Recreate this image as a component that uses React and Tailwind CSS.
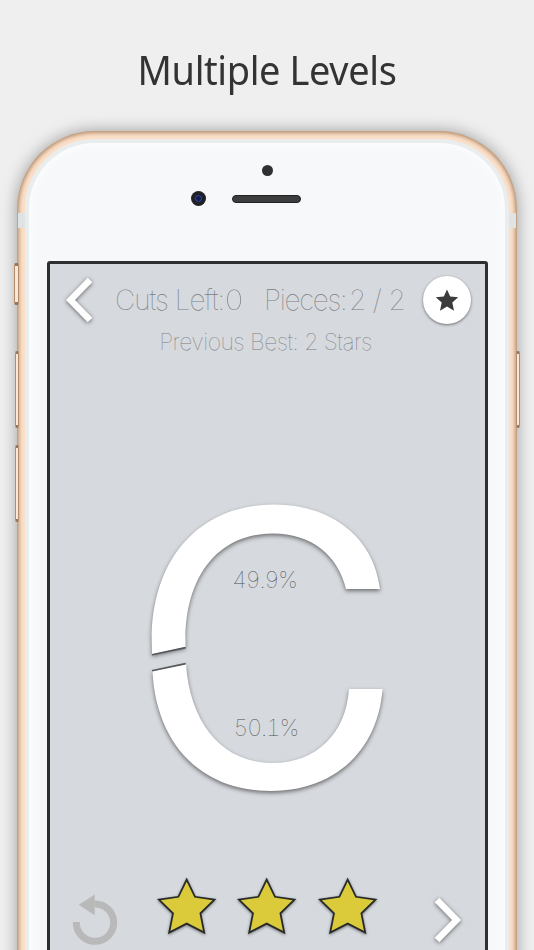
import React from "react";

const pieces = [
  {
    percent: "49.9%",
    path: "M152 654.5L151.7 640C151.5 560 198 504.5 274 504.5C332 504.5 374 538 380 589L346 589C338 555 311 533.5 273 533.5C219 533.5 185.5 575 185.5 640L185.5 647Z",
    cut: "M152 654.7L185.7 647.6",
  },
  {
    percent: "50.1%",
    path: "M152.5 671L186 664C190 724 223 763 272 763C317 763 346 733 349 689L382.5 689C378 751 334 791 271 791C200 791 156 743 152.5 671Z",
    cut: "M152 670.7L185.7 663.6",
  },
];

const Chevron = ({ points }) => (
  <svg className="w-10 h-14 overflow-visible drop-shadow-[0_1px_2px_rgba(0,0,0,0.55)]" viewBox="0 0 40 56">
    <polyline points={points} fill="none" stroke="#fff" strokeWidth="6.5" />
  </svg>
);

const Star = () => (
  <svg className="w-[60px] h-[60px] overflow-visible drop-shadow-[0_1px_1.5px_rgba(0,0,0,0.45)]" viewBox="0 0 60 60">
    <path
      d="M29.7 5.6L38 22.8L57.5 25.6L43.4 39.4L47.2 58.6L29.7 49.6L12.2 58.6L16 39.4L1.9 25.6L21.4 22.8Z"
      fill="#dbcb3b"
      stroke="#272a29"
      strokeWidth="1.8"
    />
  </svg>
);

const Header = () => (
  <div className="h-[100px] text-[#7b7d80] font-thin whitespace-nowrap">
    <div className="flex items-center h-[72px] text-[28px]">
      <div className="w-[65px] pl-[9px]">
        <Chevron points="31,8 11.5,28 31,48" />
      </div>
      <div className="w-[110px] tracking-[-1px]">Cuts Left:</div>
      <div className="w-[39px]">
        <span className="inline-block origin-left scale-x-110">0</span>
      </div>
      <div className="w-[85px] tracking-[-1.3px]">Pieces:</div>
      <div className="w-[74px] tracking-[-0.7px]">2 / 2</div>
      <div className="w-12 h-12 rounded-full bg-white flex items-center justify-center shadow-[0_1px_3px_rgba(0,0,0,0.5)]">
        <svg className="w-6 h-6" viewBox="0 0 24 24" fill="#3b3b3b">
          <path d="M12 1.5L15.2 8.5L23.2 9.2L17.3 14.5L19 22.7L12 18.6L5 22.7L6.7 14.5L0.8 9.2L8.8 8.5Z" />
        </svg>
      </div>
    </div>
    <div className="text-center text-[23px] leading-[28px] -mt-2 -ml-1 tracking-[-0.55px]">Previous Best: 2 Stars</div>
  </div>
);

const Board = () => (
  <div className="relative mt-[126px] ml-[90px] w-[260px] h-[320px] font-thin text-[23px] text-[#4c4e50] tabular-nums">
    <svg className="w-[260px] h-[320px]" viewBox="140 490 260 320">
      {pieces.map((p) => (
        <g key={p.percent}>
          <path d={p.path} fill="#fff" className="drop-shadow-[0_2px_2px_rgba(0,0,0,0.5)]" />
          <path d={p.cut} stroke="#55575a" strokeWidth="1.6" />
        </g>
      ))}
    </svg>
    <span className="absolute left-[92px] top-[73px] tracking-[-1.1px]">{pieces[0].percent}</span>
    <span className="absolute left-[93.5px] top-[221px] tracking-[-1.1px]">{pieces[1].percent}</span>
  </div>
);

const Footer = () => (
  <div className="flex items-start mt-[64px]">
    <svg className="w-[50px] h-[56px] ml-5 mt-[16px]" viewBox="70 890 50 56">
      <path d="M76.3 922A18.7 18.7 0 1 0 94.7 903.9" fill="none" stroke="#b9b9b9" strokeWidth="7" />
      <path d="M78.7 904.7L94.7 894.5V915.2Z" fill="#b9b9b9" />
    </svg>
    <div className="flex gap-[20.7px] ml-[36.5px]">
      <Star />
      <Star />
      <Star />
    </div>
    <div className="ml-[50px] mt-[18px]">
      <Chevron points="9,8 28.5,28 9,48" />
    </div>
  </div>
);

const SideButton = ({ className }) => (
  <div
    className={`absolute rounded-[2px] border border-[#b48c6c] border-y-[3px] border-y-[#94765c] bg-[#fce7d6] ${className}`}
  />
);

export default function App() {
  return (
    <div className="w-[534px] h-[950px] overflow-hidden bg-[#efefef] font-['Inter',sans-serif]">
      <h1 className="h-[131px] pt-[42px] text-center text-[40px] leading-[56px] tracking-[-0.4px] scale-x-[0.948] text-[#333] font-['Noto_Sans',sans-serif]">
        Multiple Levels
      </h1>
      <div className="relative ml-[17px] w-[500px] h-[1000px] rounded-[78px] p-2 bg-[#fbdfc8] shadow-[0_0_16px_rgba(0,0,0,0.35),inset_0_0_4px_1.5px_#a8825f]">
        <div className="absolute left-px top-[82px] w-[498px] h-[15px] bg-[#e0e3e3]" />
        <SideButton className="-left-[3px] top-[132px] w-[5px] h-[42px]" />
        <SideButton className="-left-[2px] top-[220px] w-[4px] h-[77px]" />
        <SideButton className="-left-[2px] top-[314px] w-[4px] h-[77px]" />
        <SideButton className="-right-[3px] top-[220px] w-[4px] h-[77px]" />
        <div className="relative h-full rounded-[70px] border-4 border-[#e9edee] bg-[#f7f8fa] shadow-[inset_0_0_12px_#fff] px-[18px]">
          <div className="flex justify-center pt-[21.5px]">
            <div className="w-[11px] h-[11px] rounded-full bg-[#303032]" />
          </div>
          <div className="flex items-center h-[15px] mt-[15.5px] ml-[144px]">
            <div className="w-[15px] h-[15px] rounded-full bg-[#202124] flex items-center justify-center">
              <div className="w-[7px] h-[7px] rounded-full bg-[#121c50] border border-[#3548a5]" />
            </div>
            <div className="ml-[26px] w-[69px] h-2 rounded-full bg-[#3d3d3d] border border-[#222]" />
          </div>
          <div className="mt-[55px] w-[441px] h-[800px] border-[3px] border-[#2d302f] rounded-[3px] bg-[#d6d9de]">
            <Header />
            <Board />
            <Footer />
          </div>
        </div>
      </div>
    </div>
  );
}
